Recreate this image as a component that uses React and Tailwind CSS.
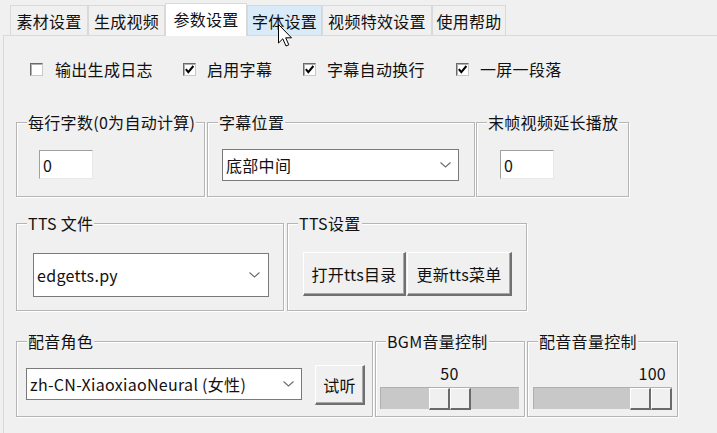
import React from "react";

const Frame = ({ label, className, children }) => (
  <div
    className={
      "relative shrink-0 border border-[#b5b5b5] shadow-[inset_1px_1px_0_#ffffff,1px_1px_0_#ffffff] " +
      className
    }
  >
    <span className="absolute left-[10px] -top-[11px] px-[1px] bg-[#f0f0f0] leading-[20px] text-[16px] whitespace-nowrap">
      {label}
    </span>
    {children}
  </div>
);

const Check = ({ checked }) => (
  <span className="w-[13px] h-[13px] shrink-0 bg-white border border-t-[#6a6a6a] border-l-[#6a6a6a] border-r-[#c8c8c8] border-b-[#c8c8c8] shadow-[inset_1px_1px_0_#b0b0b0] flex items-center justify-center">
    {checked && (
      <svg width="11" height="11" viewBox="0 0 11 11">
        <path d="M1.8 5.2 L4.3 8.2 L9.4 2" fill="none" stroke="#000" strokeWidth="2" />
      </svg>
    )}
  </span>
);

const Chevron = () => (
  <svg width="11" height="6" viewBox="0 0 11 6" className="shrink-0">
    <path d="M0.5 0.5 L5.5 5 L10.5 0.5" fill="none" stroke="#6d6d6d" strokeWidth="1.1" />
  </svg>
);

const Entry = ({ value }) => (
  <div className="w-[54px] h-[29px] bg-white border border-t-[#a0a0a0] border-l-[#a0a0a0] border-r-[#e8e8e8] border-b-[#e8e8e8] flex items-center pl-[3px] text-[16px] leading-[20px]">
    {value}
  </div>
);

const Combo = ({ value, className, chevronPr }) => (
  <div
    className={
      "bg-white border border-[#7a7a7a] flex items-center justify-between pl-[3px] text-[16px] leading-[20px] " +
      className
    }
  >
    <span className="whitespace-nowrap">{value}</span>
    <span className={chevronPr}>
      <Chevron />
    </span>
  </div>
);

const Btn = ({ children, className }) => (
  <div
    className={
      "bg-[#f0f0f0] border-t border-l border-t-white border-l-white border-r-2 border-b-2 border-r-[#707070] border-b-[#707070] shadow-[inset_-1px_-1px_0_#a8a8a8] flex items-center justify-center text-[16px] leading-[20px] whitespace-nowrap " +
      className
    }
  >
    {children}
  </div>
);

const Handle = () => (
  <div className="w-[42px] h-[22px] flex">
    <div className="w-[21px] h-full bg-[#f0f0f0] border-t border-l border-t-white border-l-white border-r-2 border-b-2 border-r-[#6a6a6a] border-b-[#6a6a6a]" />
    <div className="w-[21px] h-full bg-[#f0f0f0] border-t border-l border-t-white border-l-white border-r-2 border-b-2 border-r-[#6a6a6a] border-b-[#6a6a6a]" />
  </div>
);

const tabs = [
  { t: "素材设置", w: "w-[78px]" },
  { t: "生成视频", w: "w-[77px]" },
  { t: "参数设置", w: "w-[82px]", sel: true },
  { t: "字体设置", w: "w-[75px]", hover: true },
  { t: "视频特效设置", w: "w-[110px]" },
  { t: "使用帮助", w: "w-[74px]" },
];

export default function App() {
  return (
    <div className="relative w-[717px] h-[433px] overflow-hidden bg-[#f0f0f0] text-[#111] tracking-[0.3px] font-['Noto_Sans_CJK_SC','Microsoft_YaHei',sans-serif]">
      {/* tab bar */}
      <div className="relative z-10 flex items-end h-[35px] pl-[10px]">
        {tabs.map((tab) =>
          tab.sel ? (
            <div
              key={tab.t}
              className={
                tab.w +
                " h-[33px] -mb-px bg-white border border-b-0 border-[#d9d9d9] flex items-center justify-center text-[16px] leading-[20px] pb-[2px]"
              }
            >
              {tab.t}
            </div>
          ) : (
            <div
              key={tab.t}
              className={
                tab.w +
                (tab.hover ? " bg-[#d9eaf9] border-[#c5dcf0]" : " bg-[#f0f0f0] border-[#d9d9d9]") +
                " h-[30px] border border-b-0 flex items-center justify-center text-[16px] leading-[20px]"
              }
            >
              {tab.t}
            </div>
          )
        )}
      </div>

      {/* panel */}
      <div className="ml-[3px] h-[398px] border-l border-t border-[#d9d9d9] bg-[#f0f0f0] pl-[12px]">
        {/* checkbox row */}
        <div className="flex items-center h-[20px] mt-[23px] pl-[14px] text-[16px] leading-[20px]">
          <div className="w-[153px] flex items-center gap-[12px]">
            <Check />
            <span>输出生成日志</span>
          </div>
          <div className="w-[120px] flex items-center gap-[11px]">
            <Check checked />
            <span>启用字幕</span>
          </div>
          <div className="w-[153px] flex items-center gap-[11px]">
            <Check checked />
            <span>字幕自动换行</span>
          </div>
          <div className="flex items-center gap-[11px]">
            <Check checked />
            <span>一屏一段落</span>
          </div>
        </div>

        {/* row 2 */}
        <div className="flex mt-[43px]">
          <Frame label="每行字数(0为自动计算)" className="w-[189px] h-[75px] pl-[22px] pt-[27px]">
            <Entry value="0" />
          </Frame>
          <Frame label="字幕位置" className="ml-[2px] w-[268px] h-[75px] pl-[14px] pt-[26px]">
            <Combo value="底部中间" className="w-[237px] h-[32px]" chevronPr="pr-[7px]" />
          </Frame>
          <Frame label="末帧视频延长播放" className="ml-[1px] w-[153px] h-[75px] pl-[23px] pt-[27px]">
            <Entry value="0" />
          </Frame>
        </div>

        {/* row 3 */}
        <div className="flex mt-[26px]">
          <Frame label="TTS 文件" className="w-[268px] h-[88px] pl-[16px] pt-[29px]">
            <Combo value="edgetts.py" className="w-[236px] h-[44px]" chevronPr="pr-[8px]" />
          </Frame>
          <Frame label="TTS设置" className="ml-[3px] w-[240px] h-[88px] pl-[15px] pt-[28px]">
            <div className="flex gap-[1px]">
              <Btn className="w-[103px] h-[44px]">打开tts目录</Btn>
              <Btn className="w-[105px] h-[44px]">更新tts菜单</Btn>
            </div>
          </Frame>
        </div>

        {/* row 4 */}
        <div className="flex mt-[30px]">
          <Frame label="配音角色" className="w-[357px] h-[76px] pl-[9px] pt-[26px]">
            <div className="flex items-start">
              <Combo value="zh-CN-XiaoxiaoNeural (女性)" className="w-[276px] h-[32px]" chevronPr="pr-[7px]" />
              <Btn className="ml-[13px] -mt-[3px] w-[50px] h-[40px]">试听</Btn>
            </div>
          </Frame>
          <Frame label="BGM音量控制" className="ml-[2px] w-[150px] h-[76px] pl-[4px] pt-[21px]">
            <div className="w-[139px] text-center text-[16px] leading-[20px] h-[24px]">50</div>
            <div className="w-[139px] h-[22px] bg-[#c8c8c8] border-t border-l border-[#b0b0b0] flex pl-[48px]">
              <Handle />
            </div>
          </Frame>
          <Frame label="配音音量控制" className="ml-[2px] w-[151px] h-[76px] pl-[5px] pt-[21px]">
            <div className="w-[139px] text-right pr-[6px] text-[16px] leading-[20px] h-[24px]">100</div>
            <div className="w-[139px] h-[22px] bg-[#c8c8c8] border-t border-l border-[#b0b0b0] flex justify-end">
              <Handle />
            </div>
          </Frame>
        </div>
      </div>

      {/* mouse cursor */}
      <svg
        className="absolute left-[278px] top-[24px] z-20"
        width="15"
        height="24"
        viewBox="0 0 15 24"
      >
        <path
          d="M0.5 0.5 L0.5 19 L4.8 14.8 L8 22 L10.8 20.8 L7.7 13.8 L13.5 13.8 Z"
          fill="#fff"
          stroke="#000"
          strokeWidth="1"
          strokeLinejoin="round"
        />
      </svg>
    </div>
  );
}
